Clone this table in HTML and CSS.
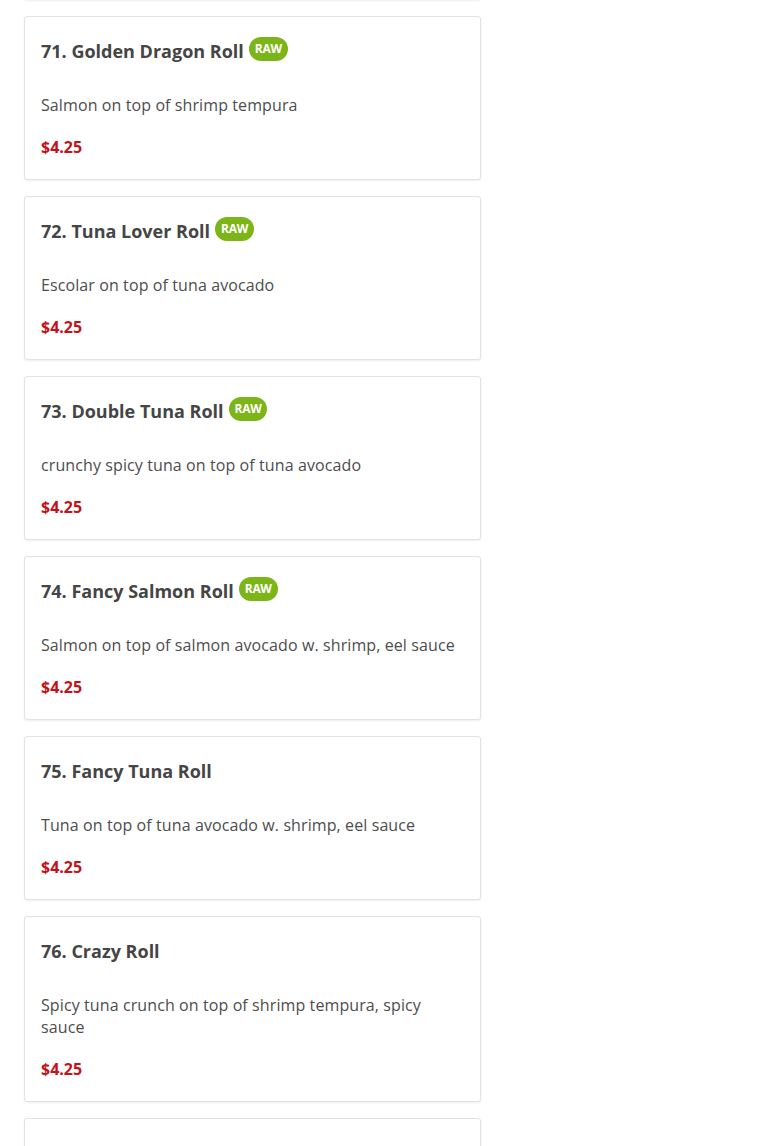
FILE: index.html
```html
<!DOCTYPE html>
<html>
<head>
<meta charset="utf-8">
<link rel="stylesheet" href="styles.css">
</head>
<body>
<div class="menu">
  <div class="card">
    <h3 class="title">70. Dragon Roll</h3>
    <p class="desc">Eel on top of california roll</p>
    <p class="price">$4.25</p>
  </div>
  <div class="card">
    <h3 class="title">71. Golden Dragon Roll <span class="badge">RAW</span></h3>
    <p class="desc">Salmon on top of shrimp tempura</p>
    <p class="price">$4.25</p>
  </div>
  <div class="card">
    <h3 class="title">72. Tuna Lover Roll <span class="badge">RAW</span></h3>
    <p class="desc">Escolar on top of tuna avocado</p>
    <p class="price">$4.25</p>
  </div>
  <div class="card">
    <h3 class="title">73. Double Tuna Roll <span class="badge">RAW</span></h3>
    <p class="desc">crunchy spicy tuna on top of tuna avocado</p>
    <p class="price">$4.25</p>
  </div>
  <div class="card">
    <h3 class="title">74. Fancy Salmon Roll <span class="badge">RAW</span></h3>
    <p class="desc">Salmon on top of salmon avocado w. shrimp, eel sauce</p>
    <p class="price">$4.25</p>
  </div>
  <div class="card">
    <h3 class="title">75. Fancy Tuna Roll</h3>
    <p class="desc">Tuna on top of tuna avocado w. shrimp, eel sauce</p>
    <p class="price">$4.25</p>
  </div>
  <div class="card">
    <h3 class="title">76. Crazy Roll</h3>
    <p class="desc">Spicy tuna crunch on top of shrimp tempura, spicy sauce</p>
    <p class="price">$4.25</p>
  </div>
  <div class="card">
    <h3 class="title">77. Spider Roll</h3>
    <p class="desc">Soft shell crab, cucumber, avocado</p>
    <p class="price">$4.25</p>
  </div>
</div>
</body>
</html>
```
FILE: styles.css
```css
html, body {
  margin: 0;
  padding: 0;
  background: #fff;
}
body {
  font-family: "Open Sans", "Liberation Sans", sans-serif;
  overflow: hidden;
}
.menu {
  display: flex;
  flex-direction: column;
  gap: 16px;
  width: 457px;
  margin-left: 24px;
  margin-top: -164px;
}
.card {
  box-sizing: border-box;
  border: 1px solid #e3e3e3;
  border-radius: 3px;
  box-shadow: 0 1px 2px rgba(0,0,0,0.07);
  padding: 0 16px 21px 16px;
  background: #fff;
}
.title {
  margin: 22px 0 0 0;
  font-size: 18px;
  line-height: 24px;
  font-weight: 700;
  color: #454545;
  display: flex;
  align-items: center;
  gap: 5px;
}
.badge {
  display: inline-flex;
  align-items: center;
  justify-content: center;
  background: #7cb518;
  color: #fff;
  font-size: 12px;
  font-weight: 700;
  height: 24px;
  padding: 0 6px;
  border-radius: 12px;
  position: relative;
  top: -2px;
  letter-spacing: -0.3px;
}
.desc {
  margin: 31px 0 0 0;
  font-size: 16px;
  line-height: 22px;
  color: #4d4d4d;
  letter-spacing: 0.1px;
}
.price {
  margin: 20px 0 0 0;
  font-size: 16px;
  line-height: 22px;
  font-weight: 700;
  color: #c4121b;
}
```
